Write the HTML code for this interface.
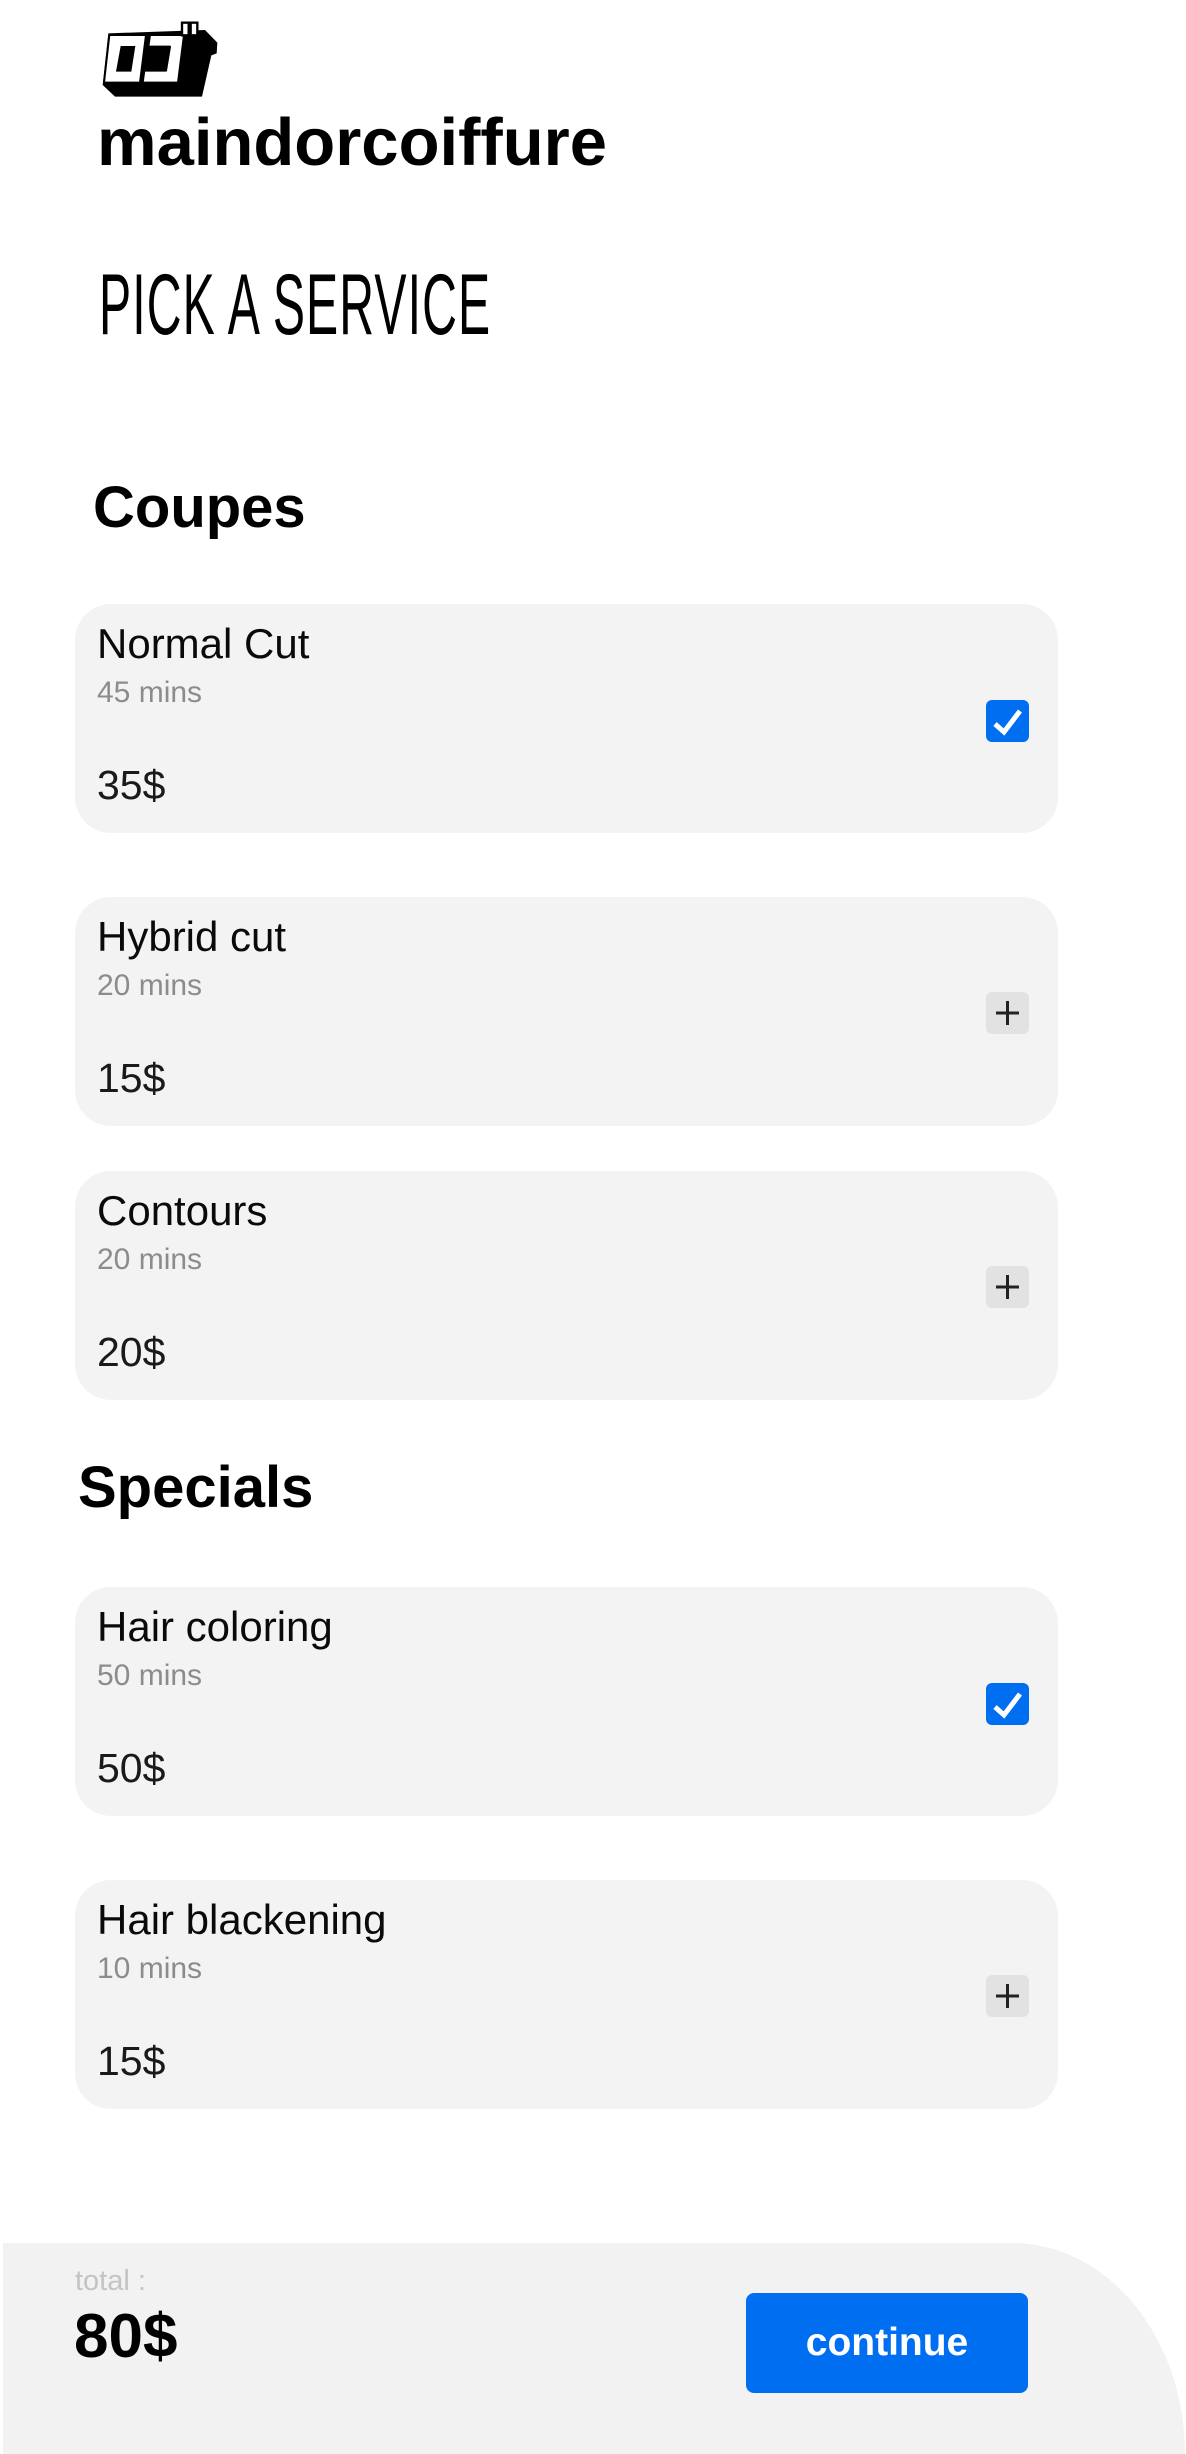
<!DOCTYPE html>
<html><head><meta charset="utf-8">
<style>
*{margin:0;padding:0;box-sizing:border-box}
html,body{width:1186px;height:2454px;background:#fff;overflow:hidden;position:relative;font-family:"Liberation Sans",sans-serif}
.abs{position:absolute;white-space:nowrap}
.card{position:absolute;left:75px;width:983px;height:229px;background:#f3f3f3;border-radius:36px}
.card .t{position:absolute;left:22px;top:19px;font-size:42px;line-height:41px;color:#0a0a0a}
.card .m{position:absolute;left:22px;top:74px;font-size:30px;line-height:29px;color:#8c8c8c}
.card .p{position:absolute;left:22px;top:162px;font-size:41px;line-height:39px;color:#1a1a1a}
.chk{position:absolute;left:911px;top:96px;width:43px;height:42px;border-radius:6px;background:#006ef0}
.plus{position:absolute;left:911px;top:95px;width:43px;height:42px;border-radius:6px;background:#e2e2e2}
.h{position:absolute;font-weight:bold;font-size:58px;line-height:60px;color:#000}
</style></head><body>

<svg class="abs" style="left:90px;top:20px" width="140" height="80" viewBox="0 0 420 240">
  <polygon points="38,195 55,40 345,30 382,68 380,100 364,106 336,230 75,230" fill="#000"/>
  <polygon points="58,45 168,45 150,188 42,188" fill="#fff" stroke="#000" stroke-width="6" stroke-linejoin="round"/>
  <polygon points="92,78 136,78 124,155 78,155" fill="#000"/>
  <polygon points="180,45 282,45 264,188 158,188 163,152 228,152 240,80 175,80" fill="#fff" stroke="#000" stroke-width="6" stroke-linejoin="round"/>
  <rect x="276" y="8" width="20" height="38" fill="#fff" stroke="#000" stroke-width="7"/>
  <rect x="302" y="8" width="20" height="38" fill="#fff" stroke="#000" stroke-width="7"/>
</svg>

<div class="abs" style="left:97px;top:108px;font-size:67px;line-height:70px;font-weight:bold;color:#000">maindorcoiffure</div>

<div class="abs" style="left:99px;top:260px;font-size:86px;line-height:90px;color:#000;transform:scaleX(0.56);transform-origin:0 0;letter-spacing:2px">PICK A SERVICE</div>

<div class="h" style="left:93px;top:478px">Coupes</div>

<div class="card" style="top:604px">
  <div class="t">Normal Cut</div><div class="m">45 mins</div><div class="p">35$</div>
  <div class="chk"><svg width="43" height="42"><path d="M9 24 L18 32 L34 11" fill="none" stroke="#fff" stroke-width="5"/></svg></div>
</div>
<div class="card" style="top:897px">
  <div class="t">Hybrid cut</div><div class="m">20 mins</div><div class="p">15$</div>
  <div class="plus"><svg width="43" height="42"><path d="M10 21 H33 M21.5 9 V33" stroke="#222" stroke-width="3"/></svg></div>
</div>
<div class="card" style="top:1171px">
  <div class="t">Contours</div><div class="m">20 mins</div><div class="p">20$</div>
  <div class="plus"><svg width="43" height="42"><path d="M10 21 H33 M21.5 9 V33" stroke="#222" stroke-width="3"/></svg></div>
</div>

<div class="h" style="left:78px;top:1458px">Specials</div>

<div class="card" style="top:1587px">
  <div class="t">Hair coloring</div><div class="m">50 mins</div><div class="p">50$</div>
  <div class="chk"><svg width="43" height="42"><path d="M9 24 L18 32 L34 11" fill="none" stroke="#fff" stroke-width="5"/></svg></div>
</div>
<div class="card" style="top:1880px">
  <div class="t">Hair blackening</div><div class="m">10 mins</div><div class="p">15$</div>
  <div class="plus"><svg width="43" height="42"><path d="M10 21 H33 M21.5 9 V33" stroke="#222" stroke-width="3"/></svg></div>
</div>

<div class="abs" style="left:3px;top:2243px;width:1182px;height:211px;background:#f2f2f2;border-top-right-radius:270px 330px"></div>
<div class="abs" style="left:75px;top:2267px;font-size:29px;line-height:29px;color:#c4c4c4">total :</div>
<div class="abs" style="left:74px;top:2306px;font-size:62px;line-height:62px;font-weight:bold;color:#000">80$</div>
<div class="abs" style="left:746px;top:2293px;width:282px;height:100px;border-radius:8px;background:#006ef0;color:#fff;font-weight:bold;font-size:39px;line-height:100px;text-align:center">continue</div>

</body></html>
